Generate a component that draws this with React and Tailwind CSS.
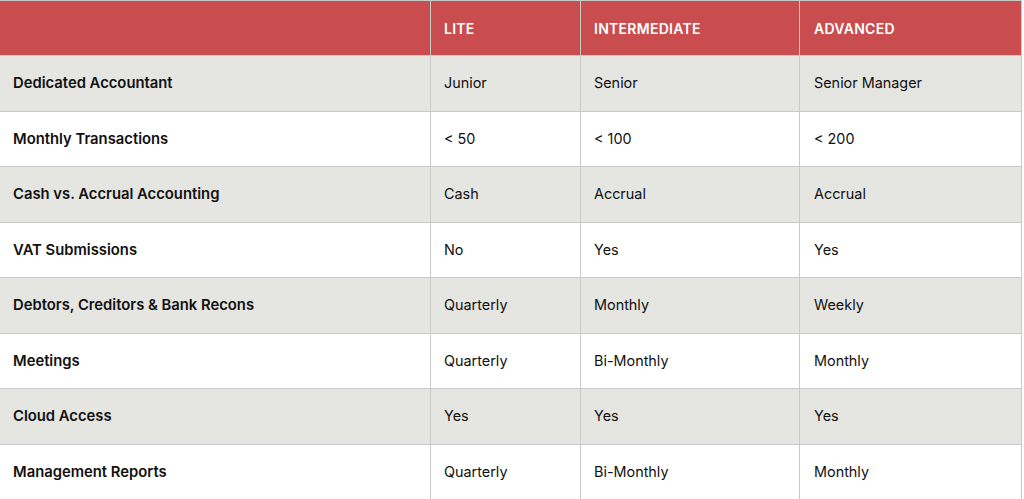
export default function App() {
  const rows = [
    ["Dedicated Accountant", "Junior", "Senior", "Senior Manager"],
    ["Monthly Transactions", "< 50", "< 100", "< 200"],
    ["Cash vs. Accrual Accounting", "Cash", "Accrual", "Accrual"],
    ["VAT Submissions", "No", "Yes", "Yes"],
    ["Debtors, Creditors & Bank Recons", "Quarterly", "Monthly", "Weekly"],
    ["Meetings", "Quarterly", "Bi-Monthly", "Monthly"],
    ["Cloud Access", "Yes", "Yes", "Yes"],
    ["Management Reports", "Quarterly", "Bi-Monthly", "Monthly"],
  ];
  const cols = "grid grid-cols-[431px_150px_219px_222px]";
  return (
    <div className="w-[1024px] h-[499px] bg-white overflow-hidden" style={{ fontFamily: "Inter, sans-serif" }}>
      <div className="w-[1022px] border-r border-t border-[#c9c9c7]">
        <div className={`${cols} h-[55px] bg-[#c94c4f] border-b border-[#c9c9c7] text-white font-semibold text-[14px] tracking-[0.02em]`}>
          <div className="border-r border-[#c9c9c7]"></div>
          <div className="border-r border-[#c9c9c7] flex items-center pl-[13px]">LITE</div>
          <div className="border-r border-[#c9c9c7] flex items-center pl-[13px]">INTERMEDIATE</div>
          <div className="flex items-center pl-[14px]">ADVANCED</div>
        </div>
        {rows.map((r, i) => (
          <div
            key={i}
            className={`${cols} h-[55.5px] border-b border-[#c9c9c7] text-[14.4px] text-[#111] ${i % 2 === 0 ? "bg-[#e5e5e1]" : "bg-white"}`}
          >
            <div className="border-r border-[#c9c9c7] flex items-center pl-[13px] font-semibold text-[14.8px]">{r[0]}</div>
            <div className="border-r border-[#c9c9c7] flex items-center pl-[13px]">{r[1]}</div>
            <div className="border-r border-[#c9c9c7] flex items-center pl-[13px]">{r[2]}</div>
            <div className="flex items-center pl-[14px]">{r[3]}</div>
          </div>
        ))}
      </div>
    </div>
  );
}
